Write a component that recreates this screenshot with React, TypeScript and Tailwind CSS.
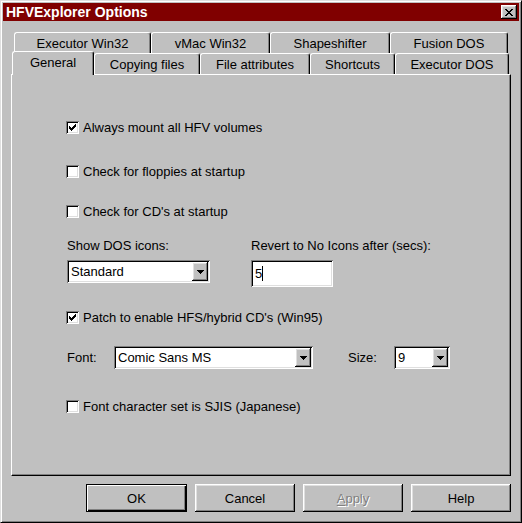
import React from "react";

const raised =
  "shadow-[inset_-1px_-1px_#000,inset_1px_1px_#fff,inset_-2px_-2px_#808080,inset_2px_2px_#dfdfdf]";
const sunken =
  "shadow-[inset_1px_1px_#808080,inset_-1px_-1px_#fff,inset_2px_2px_#000,inset_-2px_-2px_#dfdfdf]";

const backRow = [
  { label: "Executor Win32", w: "w-[137px]" },
  { label: "vMac Win32", w: "w-[119px]" },
  { label: "Shapeshifter", w: "w-[120px]" },
  { label: "Fusion DOS", w: "w-[118px]" },
];

const frontRow = [
  { label: "Copying files", w: "w-[106px]" },
  { label: "File attributes", w: "w-[110px]" },
  { label: "Shortcuts", w: "w-[85px]" },
  { label: "Executor DOS", w: "w-[114px]" },
];

const Check = () => (
  <svg width="7" height="7" viewBox="0 0 7 7" shapeRendering="crispEdges">
    <path
      fill="#000"
      d="M6 0h1v3h-1zM5 1h1v3h-1zM4 2h1v3h-1zM3 3h1v3h-1zM2 4h1v3h-1zM1 3h1v3h-1zM0 2h1v3h-1z"
    />
  </svg>
);

const Checkbox = ({ checked, label }: { checked?: boolean; label: string }) => (
  <div className="flex items-center h-[16px] gap-[4px]">
    <div className={`w-[13px] h-[13px] bg-white flex items-center justify-center ${sunken}`}>
      {checked && <Check />}
    </div>
    <span>{label}</span>
  </div>
);

const Arrow = () => (
  <svg width="7" height="4" viewBox="0 0 7 4" shapeRendering="crispEdges">
    <path fill="#000" d="M0 0h7v1h-7zM1 1h5v1h-5zM2 2h3v1h-3zM3 3h1v1h-1z" />
  </svg>
);

const Combo = ({ value, w }: { value: string; w: string }) => (
  <div className={`${w} h-[23px] bg-white flex items-stretch p-[2px] ${sunken}`}>
    <div className="flex-1 flex items-center pl-[2px] leading-none">{value}</div>
    <div className={`w-[16px] bg-[#c0c0c0] flex items-center justify-center ${raised}`}>
      <Arrow />
    </div>
  </div>
);

const tabBase =
  "flex items-center justify-center pt-[1px] bg-[#c0c0c0] border-l border-t border-white border-r border-r-black rounded-t-[3px] shadow-[inset_-1px_0_#808080]";

export default function App() {
  return (
    <div className="w-[522px] h-[523px] bg-[#c0c0c0] border border-t-[#dfdfdf] border-l-[#dfdfdf] border-r-black border-b-black shadow-[inset_1px_1px_#fff,inset_-1px_-1px_#808080] p-[2px] font-['Liberation_Sans',Arial,sans-serif] text-[13px] text-black leading-none select-none">
      {/* title bar */}
      <div className="h-[18px] bg-[#800000] flex items-center justify-between pl-[3px] pr-[2px]">
        <span className="text-white font-bold text-[14px]">HFVExplorer Options</span>
        <div className={`w-[16px] h-[14px] bg-[#c0c0c0] flex items-center justify-center ${raised}`}>
          <svg width="8" height="7" viewBox="0 0 8 7" shapeRendering="crispEdges">
            <path
              fill="#000"
              d="M0 0h2v1h-2zM6 0h2v1h-2zM1 1h2v1h-2zM5 1h2v1h-2zM2 2h4v1h-4zM3 3h2v1h-2zM2 4h4v1h-4zM1 5h2v1h-2zM5 5h2v1h-2zM0 6h2v1h-2zM6 6h2v1h-2z"
            />
          </svg>
        </div>
      </div>

      <div className="px-[8px] mt-[11px]">
        {/* back tab row */}
        <div className="flex h-[21px] pl-[3px]">
          {backRow.map((t) => (
            <div key={t.label} className={`${tabBase} ${t.w}`}>
              {t.label}
            </div>
          ))}
        </div>
        {/* front tab row */}
        <div className="flex items-start h-[21px] pl-[1px]">
          <div className={`relative z-10 -mt-[2px] h-[24px] w-[82px] ${tabBase} pb-[4px]`}>General</div>
          {frontRow.map((t) => (
            <div key={t.label} className={`h-[21px] ${tabBase} ${t.w}`}>
              {t.label}
            </div>
          ))}
        </div>

        {/* tab panel */}
        <div className="h-[402px] border border-t-white border-l-white border-r-black border-b-black shadow-[inset_-1px_-1px_#808080] pl-[54px] pt-[44px] flex flex-col">
          <Checkbox checked label="Always mount all HFV volumes" />
          <div className="mt-[28px]">
            <Checkbox label="Check for floppies at startup" />
          </div>
          <div className="mt-[24px]">
            <Checkbox label="Check for CD's at startup" />
          </div>

          <div className="mt-[18px] flex">
            <div className="w-[185px] flex flex-col">
              <div className="h-[16px] flex items-center pl-[1px]">Show DOS icons:</div>
              <div className="mt-[7px] ml-[1px]">
                <Combo value="Standard" w="w-[143px]" />
              </div>
            </div>
            <div className="flex flex-col">
              <div className="h-[16px] flex items-center">Revert to No Icons after (secs):</div>
              <div className={`mt-[7px] w-[82px] h-[27px] bg-white flex items-center pl-[4px] ${sunken}`}>
                <span>5</span>
                <span className="w-[1px] h-[15px] bg-black" />
              </div>
            </div>
          </div>

          <div className="mt-[22px]">
            <Checkbox checked label="Patch to enable HFS/hybrid CD's (Win95)" />
          </div>

          <div className="mt-[21px] flex items-center h-[23px]">
            <span className="w-[48px] pl-[1px]">Font:</span>
            <Combo value="Comic Sans MS" w="w-[199px]" />
            <span className="ml-[35px] w-[46px]">Size:</span>
            <Combo value="9" w="w-[56px]" />
          </div>

          <div className="mt-[29px]">
            <Checkbox label="Font character set is SJIS (Japanese)" />
          </div>
        </div>

        {/* buttons */}
        <div className="mt-[8px] flex justify-end gap-[8px]">
          <button className="w-[101px] h-[28px] border border-black bg-[#c0c0c0] shadow-[inset_1px_1px_#fff,inset_-1px_-1px_#000,inset_-2px_-2px_#808080] flex items-center justify-center">
            OK
          </button>
          <button className={`w-[100px] h-[28px] bg-[#c0c0c0] flex items-center justify-center ${raised}`}>
            Cancel
          </button>
          <button
            className={`w-[100px] h-[28px] bg-[#c0c0c0] flex items-center justify-center text-[#808080] [text-shadow:1px_1px_#fff] ${raised}`}
          >
            <span>
              <span className="underline underline-offset-2">A</span>pply
            </span>
          </button>
          <button className={`w-[100px] h-[28px] bg-[#c0c0c0] flex items-center justify-center ${raised}`}>
            Help
          </button>
        </div>
      </div>
    </div>
  );
}
